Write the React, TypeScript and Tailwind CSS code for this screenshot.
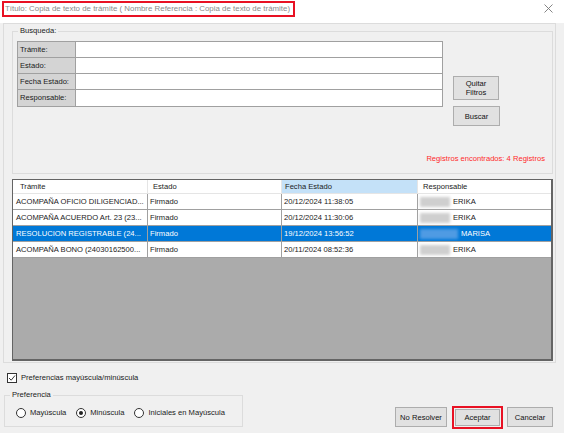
import React from "react";

const rows = [
  { tramite: "ACOMPAÑA OFICIO DILIGENCIAD...", estado: "Firmado", fecha: "20/12/2024 11:38:05", resp: "ERIKA", blur: 30, sel: false },
  { tramite: "ACOMPAÑA ACUERDO Art. 23 (23...", estado: "Firmado", fecha: "20/12/2024 11:30:06", resp: "ERIKA", blur: 30, sel: false },
  { tramite: "RESOLUCION REGISTRABLE (24...", estado: "Firmado", fecha: "19/12/2024 13:56:52", resp: "MARISA", blur: 38, sel: true },
  { tramite: "ACOMPAÑA BONO (24030162500...", estado: "Firmado", fecha: "20/11/2024 08:52:36", resp: "ERIKA", blur: 30, sel: false },
];

const filtros = ["Trámite:", "Estado:", "Fecha Estado:", "Responsable:"];

function Boton({ children, className = "" }: { children: React.ReactNode; className?: string }) {
  return (
    <div className={`flex items-center justify-center bg-[#e1e1e1] border border-[#adadad] text-[#111] leading-[9px] text-center ${className}`}>
      {children}
    </div>
  );
}

function Radio({ label, checked = false }: { label: string; checked?: boolean }) {
  return (
    <div className="flex items-center gap-[4px]">
      <div className="w-[10px] h-[10px] rounded-full border border-[#333] bg-white flex items-center justify-center">
        {checked && <div className="w-[4px] h-[4px] rounded-full bg-[#222]" />}
      </div>
      <span>{label}</span>
    </div>
  );
}

export default function App() {
  return (
    <div className="w-[564px] h-[433px] bg-[#f0f0f0] text-[7.6px] text-[#1a1a1a] overflow-hidden" style={{ fontFamily: '"Liberation Sans", Arial, sans-serif' }}>
      {/* Barra de título */}
      <div className="h-[23px] bg-white flex items-start justify-between">
        <div className="ml-[2px] mt-[1px] h-[16px] w-[293px] border-2 border-[#e81123] flex items-center pl-[1px] text-[7.9px] text-[#8a8a8a] whitespace-nowrap overflow-hidden">
          Título: Copia de texto de trámite ( Nombre Referencia : Copia de texto de trámite)
        </div>
        <svg className="mr-[11px] mt-[4px]" width="9" height="9" viewBox="0 0 9 9">
          <path d="M0.5 0.5 L8.5 8.5 M8.5 0.5 L0.5 8.5" stroke="#777" strokeWidth="0.9" />
        </svg>
      </div>

      {/* Panel principal */}
      <div className="ml-[3px] w-[553px] h-[340px] border border-[#dcdcdc] flex flex-col pl-[8px] pr-[2px] pt-[7px]">
        {/* Busqueda */}
        <div className="relative h-[143px] w-[541px] border border-[#dcdcdc] flex flex-col">
          <span className="absolute -top-[6px] left-[5px] bg-[#f0f0f0] px-[2px] leading-[10px]">Busqueda:</span>
          <div className="flex items-start pl-[4px] pt-[9px]">
            <div className="w-[426px] border border-[#a0a0a0]">
              {filtros.map((f, i) => (
                <div key={f} className={`flex h-[16px] ${i < 3 ? "border-b border-[#a0a0a0]" : ""}`}>
                  <div className="w-[58px] bg-[#d4d4d4] border-r border-[#a0a0a0] flex items-center pl-[2px]">{f}</div>
                  <div className="flex-1 bg-white" />
                </div>
              ))}
            </div>
            <div className="ml-[10px] mt-[35px] flex flex-col gap-[6px]">
              <Boton className="w-[46px] h-[24px]">Quitar<br />Filtros</Boton>
              <Boton className="w-[47px] h-[20px]">Buscar</Boton>
            </div>
          </div>
          <div className="mt-auto mb-[9px] text-right pr-[7px] text-[#ff2a2a]">Registros encontrados: 4 Registros</div>
        </div>

        {/* Tabla */}
        <div className="mt-[5px] w-[541px] h-[182px] border border-[#646464] border-b-2 border-r-2 bg-[#ababab] flex flex-col">
          <div className="flex h-[14px] bg-white border-b border-[#e5e5e5]">
            <div className="w-[135px] pl-[7px] flex items-center border-r border-[#e5e5e5]">Trámite</div>
            <div className="w-[134px] pl-[5px] flex items-center border-r border-[#e5e5e5]">Estado</div>
            <div className="w-[136px] pl-[3px] flex items-center bg-[#c4e1f8] border-r border-[#e5e5e5]">Fecha Estado</div>
            <div className="w-[133px] pl-[5px] flex items-center">Responsable</div>
          </div>
          {rows.map((r) => (
            <div key={r.fecha} className={`flex h-[16px] border-b border-[#a0a0a0] ${r.sel ? "bg-[#0078d7] text-white" : "bg-white"}`}>
              <div className="w-[135px] pl-[3px] flex items-center border-r border-[#a0a0a0] whitespace-nowrap overflow-hidden">{r.tramite}</div>
              <div className="w-[134px] pl-[2px] flex items-center border-r border-[#a0a0a0]">{r.estado}</div>
              <div className="w-[136px] pl-[2px] flex items-center border-r border-[#a0a0a0]">{r.fecha}</div>
              <div className="w-[133px] pl-[2px] flex items-center gap-[3px]">
                <div
                  className={`h-[10px] blur-[1.5px] ${r.sel ? "bg-[#4f9be3]" : "bg-[#cfcfcf]"}`}
                  style={{ width: r.blur }}
                />
                <span>{r.resp}</span>
              </div>
            </div>
          ))}
        </div>
      </div>

      {/* Pie */}
      <div className="flex items-end justify-between pr-[11px]">
        <div className="flex flex-col">
          <div className="flex items-center gap-[4px] ml-[7px] mt-[9px]">
            <div className="w-[10px] h-[10px] border border-[#333] bg-white flex items-center justify-center">
              <svg width="8" height="8" viewBox="0 0 8 8">
                <path d="M1 4 L3.2 6.2 L7 1.5" stroke="#222" strokeWidth="0.9" fill="none" />
              </svg>
            </div>
            <span>Preferencias mayúscula/minúscula</span>
          </div>
          <div className="relative ml-[4px] mt-[12px] w-[239px] h-[32px] border border-[#dcdcdc] flex items-center gap-[10px] pl-[11px] pt-[3px]">
            <span className="absolute -top-[6px] left-[5px] bg-[#f0f0f0] px-[2px] leading-[10px]">Preferencia</span>
            <Radio label="Mayúscula" />
            <Radio label="Minúscula" checked />
            <Radio label="Iniciales en Mayúscula" />
          </div>
        </div>
        <div className="flex items-end gap-[4px]">
          <Boton className="w-[52px] h-[20px]">No Resolver</Boton>
          <div className="border-2 border-[#e81123] p-[1px] ml-[1px] -mb-[2px]">
            <Boton className="w-[45px] h-[17px]">Aceptar</Boton>
          </div>
          <Boton className="w-[46px] h-[20px]">Cancelar</Boton>
        </div>
      </div>
    </div>
  );
}
